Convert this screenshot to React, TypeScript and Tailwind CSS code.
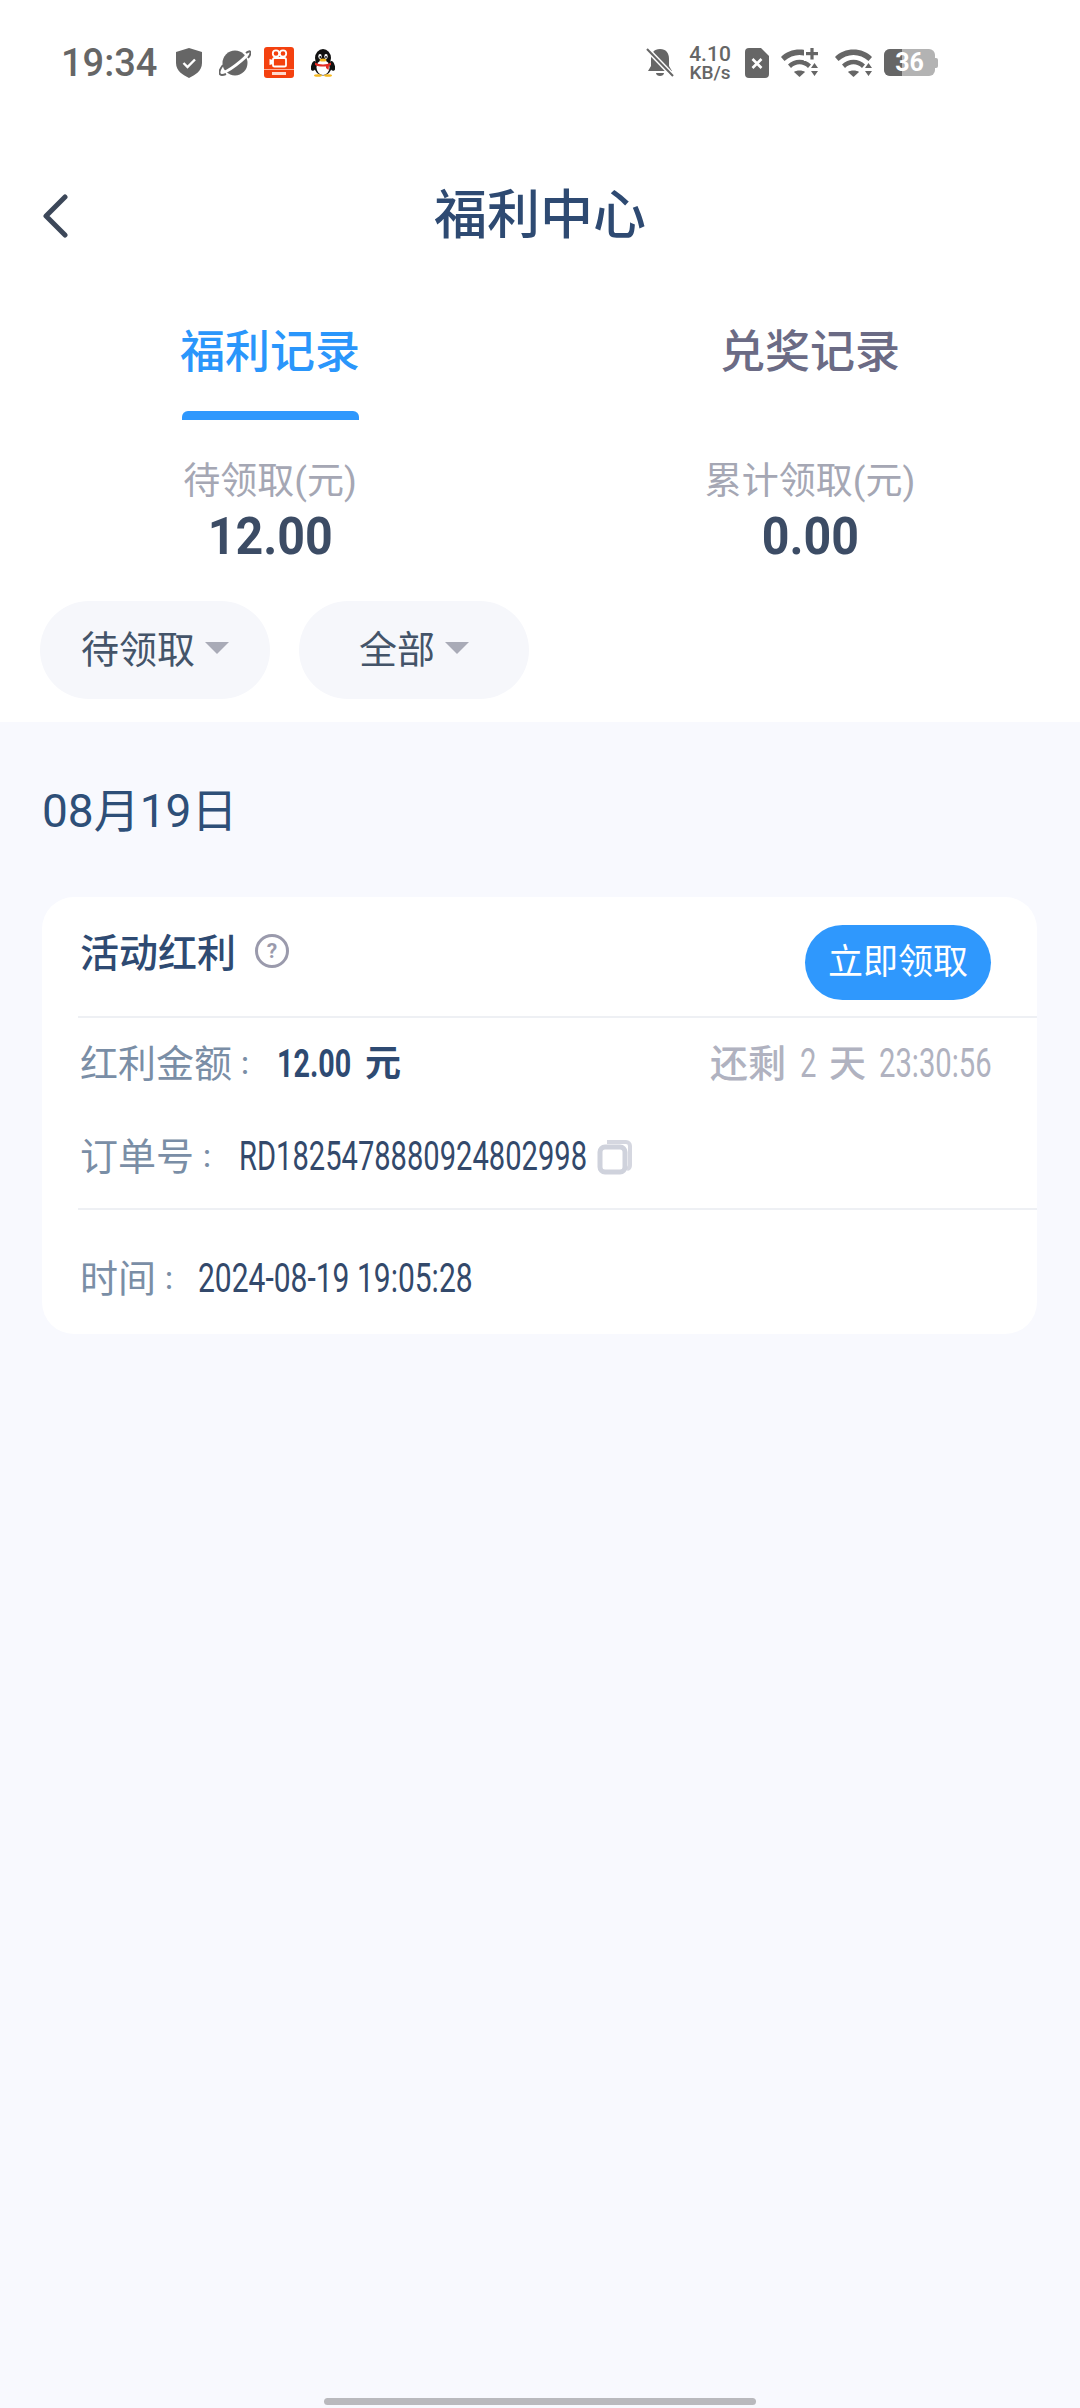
const CJK = "font-['Roboto','Noto_Sans_CJK_SC',sans-serif]"
const COLON = "font-['Noto_Sans_CJK_TC',sans-serif]"
const DIGITS = "font-['Roboto',sans-serif]"

function ShieldIcon() {
  return (
    <svg width="26" height="30" viewBox="0 0 26 30">
      <path d="M13 0 L26 4 V15 C26 23 19 27 13 30 C7 27 0 23 0 15 V4 Z" fill="#666" />
      <path d="M7.5 15 L11.5 19 L19 11.5" fill="none" stroke="#fff" strokeWidth="2.4" />
    </svg>
  )
}

function PlanetIcon() {
  return (
    <svg width="32" height="28" viewBox="0 0 32 28">
      <circle cx="16" cy="14" r="12.5" fill="#666" />
      <path d="M2 24 C8 24 26 10 30.5 3" fill="none" stroke="#fff" strokeWidth="3" />
      <path d="M4 16 C-2 24 0 28 7 25 M27 4 C32 0 33 4 29 9" fill="none" stroke="#666" strokeWidth="2" />
    </svg>
  )
}

function VideoAppIcon() {
  return (
    <svg width="30" height="31" viewBox="0 0 30 31">
      <rect width="30" height="31" rx="3" fill="#f4410f" />
      <circle cx="12" cy="6.5" r="3.2" fill="none" stroke="#fff" strokeWidth="1.8" />
      <circle cx="19" cy="6.5" r="3.2" fill="none" stroke="#fff" strokeWidth="1.8" />
      <rect x="9" y="11" width="13" height="8.5" rx="1.6" fill="none" stroke="#fff" strokeWidth="1.8" />
      <path d="M9 13 L5.5 12 V18 L9 17 Z" fill="#fff" />
      <rect x="0" y="22" width="30" height="1" fill="#ffb09a" />
      <rect x="8" y="25" width="14" height="3" fill="#ffd9cc" />
    </svg>
  )
}

function PenguinIcon() {
  return (
    <svg width="24" height="28" viewBox="0 0 24 28">
      <ellipse cx="2.8" cy="17" rx="2.6" ry="5" fill="#111" transform="rotate(18 3 17)" />
      <ellipse cx="21.2" cy="17" rx="2.6" ry="5" fill="#111" transform="rotate(-18 21 17)" />
      <ellipse cx="12" cy="9" rx="8" ry="9" fill="#111" />
      <ellipse cx="12" cy="18" rx="8.5" ry="8.5" fill="#111" />
      <ellipse cx="12" cy="18.5" rx="6.5" ry="7.5" fill="#fff" />
      <ellipse cx="9" cy="7.5" rx="1.7" ry="2.4" fill="#fff" />
      <ellipse cx="15" cy="7.5" rx="1.7" ry="2.4" fill="#fff" />
      <circle cx="9.3" cy="8" r="0.9" fill="#111" />
      <circle cx="15" cy="8" r="0.9" fill="#111" />
      <ellipse cx="12" cy="11" rx="3.5" ry="1.6" fill="#f5b81f" />
      <path d="M4 13.5 C8 16 16 16 20 13.5 L20 16 C16 18 8 18 4 16 Z" fill="#e52b22" />
      <path d="M15 16 L18 16.5 L17.5 21 L15 19 Z" fill="#e52b22" />
      <ellipse cx="7" cy="26.5" rx="4" ry="1.3" fill="#f5b81f" />
      <ellipse cx="17" cy="26.5" rx="4" ry="1.3" fill="#f5b81f" />
    </svg>
  )
}

function MutedBellIcon() {
  return (
    <svg width="28" height="30" viewBox="0 0 28 30">
      <path d="M14 1 C8 1 5 5 5 11 V18 L2 23 H26 L23 18 V11 C23 5 20 1 14 1 Z M10 25 C10 29 18 29 18 25 Z" fill="#666" />
      <path d="M1 1 L27 28" stroke="#fff" strokeWidth="5" />
      <path d="M1 1 L27 28" stroke="#666" strokeWidth="2" />
    </svg>
  )
}

function SimOffIcon() {
  return (
    <svg width="24" height="30" viewBox="0 0 24 30">
      <path d="M4 0 H16 L24 8 V26 A4 4 0 0 1 20 30 H4 A4 4 0 0 1 0 26 V4 A4 4 0 0 1 4 0 Z" fill="#666" />
      <path d="M7.5 11 L16.5 20 M16.5 11 L7.5 20" stroke="#fff" strokeWidth="2.6" />
    </svg>
  )
}

function WifiIcon({ plus }: { plus?: boolean }) {
  return (
    <svg width="38" height="30" viewBox="0 0 38 30">
      <path d="M0 9 C9 -1 28 -1 37 9 L33.5 13 C25 5 12 5 3.5 13 Z" fill="#666" />
      <path d="M7 16.5 C13 10 24 10 30 16.5 L27 20 C22 15 15 15 10 20 Z" fill="#666" />
      <path d="M13 24 C15 22 22 22 24 24 L18.5 29 Z" fill="#666" />
      <path d="M30 20 L33.5 15 L37 20 Z M30 23 H37 L33.5 28 Z" fill="#666" />
      {plus && (
        <>
          <rect x="23" y="0" width="15" height="13" fill="#fff" />
          <rect x="25" y="4" width="12" height="3.2" fill="#666" />
          <rect x="29.4" y="0" width="3.2" height="11.5" fill="#666" />
        </>
      )}
    </svg>
  )
}

function StatusBar() {
  return (
    <div className="flex h-[100px] items-center pt-[25px]">
      <div className="flex items-center">
        <span className={`ml-[61px] w-[97px] text-[38px] font-medium leading-none text-[#666] ${DIGITS}`}>19:34</span>
        <div className="ml-[18px] flex items-center">
          <ShieldIcon />
          <div className="ml-[17px]"><PlanetIcon /></div>
          <div className="ml-[13px]"><VideoAppIcon /></div>
          <div className="ml-[17px]"><PenguinIcon /></div>
        </div>
      </div>
      <div className="ml-[311px] flex items-center">
        <MutedBellIcon />
        <div className={`ml-[13px] flex w-[46px] flex-col items-center font-medium text-[#666] ${DIGITS}`}>
          <span className="text-[21px] leading-[19px]">4.10</span>
          <span className="text-[19px] leading-[17px]">KB/s</span>
        </div>
        <div className="ml-[12px]"><SimOffIcon /></div>
        <div className="ml-[12px]"><WifiIcon plus /></div>
        <div className="ml-[16px]"><WifiIcon /></div>
        <div className="relative ml-[11px] flex h-[27px] w-[51px] items-center justify-center overflow-hidden rounded-[6px] bg-[#b3b3b3]">
          <div className="absolute inset-y-0 left-0 w-[18px] bg-[#666]" />
          <span className={`relative text-[25px] font-bold leading-none text-white ${DIGITS}`}>36</span>
        </div>
        <div className="h-[10px] w-[3px] rounded-r-[2px] bg-[#b3b3b3]" />
      </div>
    </div>
  )
}

function Pill({ label, ml }: { label: string; ml?: string }) {
  return (
    <div className={`flex h-[98px] w-[230px] items-center justify-center gap-[10px] rounded-full bg-[#f6f7fb] ${ml ?? ''}`}>
      <span className={`text-[38px] leading-none text-[#445469] ${CJK}`}>{label}</span>
      <span className="mt-[-4px] h-0 w-0 border-x-[12px] border-t-[12px] border-x-transparent border-t-[#a9abb7]" />
    </div>
  )
}

function CopyIcon() {
  return (
    <svg width="36" height="36" viewBox="0 0 36 36">
      <path d="M10 3 H29 A4 4 0 0 1 33 7 V26 A4 4 0 0 1 30 30" fill="none" stroke="#d5d7e0" strokeWidth="4" />
      <rect x="3" y="8" width="25" height="25" rx="5" fill="none" stroke="#cfd2dc" strokeWidth="5" />
    </svg>
  )
}

// "label：" with the colon centred the way the app's font sets it
function RowLabel({ text }: { text: string }) {
  return (
    <span className="flex items-center text-[38px] leading-[60px] text-[#7a8ea6]">
      <span className={CJK}>{text}</span>
      <span className={`w-[26px] text-[26px] ${COLON}`}>：</span>
    </span>
  )
}

export default function App() {
  return (
    <div className="flex min-h-[2408px] flex-col bg-[#f8f9fe]">
      <div className="bg-white">
        <StatusBar />

        {/* title row */}
        <div className="relative mt-[59px] flex h-[140px] items-center justify-center pb-[26px]">
          <svg className="absolute left-[40px] top-[35px]" width="30" height="44" viewBox="0 0 30 44">
            <path d="M25 3 L6 22 L25 41" fill="none" stroke="#3c4759" strokeWidth="5" strokeLinecap="round" strokeLinejoin="round" />
          </svg>
          <h1 className={`text-[53px] font-medium leading-none text-[#2e4a72] ${CJK}`}>福利中心</h1>
        </div>

        {/* tabs */}
        <div className="flex h-[123px]">
          <div className="flex w-[540px] flex-col items-center">
            <span className={`mt-[24px] text-[45px] font-medium leading-[60px] text-[#2a96fb] ${CJK}`}>福利记录</span>
            <div className="mt-[28px] h-[9px] w-[177px] rounded-t-[6px] bg-[#2f98fd]" />
          </div>
          <div className="flex w-[540px] flex-col items-center">
            <span className={`mt-[24px] text-[45px] font-medium leading-[60px] text-[#6b6b85] ${CJK}`}>兑奖记录</span>
          </div>
        </div>

        {/* totals */}
        <div className="flex h-[179px]">
          {[
            { label: '待领取(元)', value: '12.00' },
            { label: '累计领取(元)', value: '0.00' },
          ].map(item => (
            <div key={item.label} className="flex w-[540px] flex-col items-center">
              <span className={`mt-[35px] text-[37px] leading-[50px] text-[#a5a7b4] ${CJK}`}>{item.label}</span>
              <span className={`mt-[2px] scale-x-[0.93] text-[52px] font-bold leading-[56px] text-[#3c4c65] ${DIGITS}`}>{item.value}</span>
            </div>
          ))}
        </div>

        {/* filters */}
        <div className="flex pb-[23px] pl-[40px]">
          <Pill label="待领取" />
          <Pill label="全部" ml="ml-[29px]" />
        </div>
      </div>

      <div className="flex flex-1 flex-col px-[42px]">
        <h2 className={`mt-[59px] text-[46px] leading-[60px] text-[#2e4f78] ${CJK}`}>08月19日</h2>

        {/* dividend card */}
        <div className="mt-[56px] h-[437px] w-[995px] rounded-[32px] bg-white">
          <div className="ml-[36px] flex h-[121px] items-start justify-between border-b-2 border-[#eef0f4] pl-[2px] pr-[46px]">
            <div className="mt-[29px] flex items-center">
              <span className={`text-[39px] font-medium leading-[56px] text-[#2e4a72] ${CJK}`}>活动红利</span>
              <svg className="ml-[18px] mt-[-6px]" width="36" height="36" viewBox="0 0 36 36">
                <circle cx="18" cy="18" r="15.5" fill="none" stroke="#9a9aac" strokeWidth="3" />
                <text x="18" y="25" textAnchor="middle" fontSize="21" fontWeight="700" fill="#9a9aac" fontFamily="Roboto">?</text>
              </svg>
            </div>
            <button className={`mt-[28px] flex h-[75px] w-[186px] items-center justify-center rounded-full bg-[#2f98fd] text-[35px] leading-none text-white ${CJK}`}>
              立即领取
            </button>
          </div>

          <div className="flex h-[92px] items-center justify-between pl-[38px] pr-[46px]">
            <div className="flex items-center">
              <RowLabel text="红利金额" />
              <span className={`ml-[19px] w-[74px] origin-left scale-x-[0.755] whitespace-nowrap text-[38px] font-bold leading-none text-[#2e4a72] ${DIGITS}`}>12.00</span>
              <span className={`ml-[14px] text-[36px] font-bold leading-none text-[#2e4a72] ${CJK}`}>元</span>
            </div>
            <div className="flex items-center text-[#b0b2c0]">
              <span className={`text-[38px] font-medium leading-none ${CJK}`}>还剩</span>
              <span className={`ml-[14px] w-[16px] origin-left scale-x-[0.73] text-[40px] leading-none ${DIGITS}`}>2</span>
              <span className={`ml-[13px] text-[37px] font-medium leading-none ${CJK}`}>天</span>
              <span className={`ml-[13px] w-[112px] origin-left scale-x-[0.73] whitespace-nowrap text-[40px] leading-none ${DIGITS}`}>23:30:56</span>
            </div>
          </div>

          <div className="ml-[36px] flex h-[100px] items-start border-b-2 border-[#eef0f4] pl-[2px]">
            <div className="mt-[17px] flex items-center">
              <RowLabel text="订单号" />
              <span className={`ml-[19px] w-[348px] origin-left scale-x-[0.728] whitespace-nowrap text-[40px] leading-[60px] text-[#33496b] ${DIGITS}`}>RD1825478880924802998</span>
              <div className="ml-[10px]"><CopyIcon /></div>
            </div>
          </div>

          <div className="flex items-center pl-[38px] pt-[39px]">
            <RowLabel text="时间" />
            <span className={`ml-[16px] w-[273px] origin-left scale-x-[0.75] whitespace-nowrap text-[40px] leading-[60px] text-[#33496b] ${DIGITS}`}>2024-08-19 19:05:28</span>
          </div>
        </div>

        <div className="mb-[3px] ml-[282px] mt-auto h-[7px] w-[432px] rounded-full bg-[#b9b9bd]" />
      </div>
    </div>
  )
}
